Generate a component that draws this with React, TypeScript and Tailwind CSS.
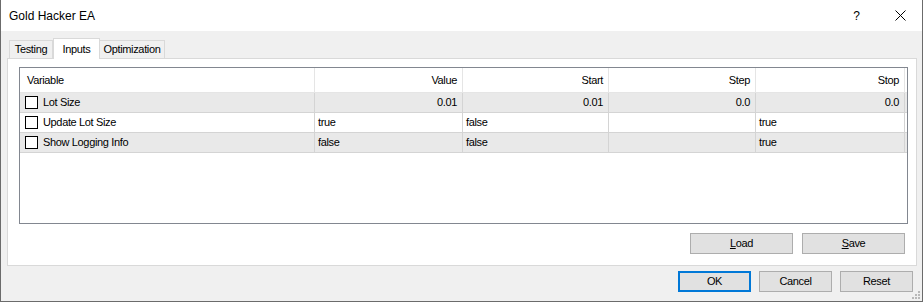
import React from 'react';

type Row = {
  name: string;
  value: string;
  start: string;
  step: string;
  stop: string;
  numeric: boolean;
};

const rows: Row[] = [
  { name: 'Lot Size', value: '0.01', start: '0.01', step: '0.0', stop: '0.0', numeric: true },
  { name: 'Update Lot Size', value: 'true', start: 'false', step: '', stop: 'true', numeric: false },
  { name: 'Show Logging Info', value: 'false', start: 'false', step: '', stop: 'true', numeric: false },
];

function WinButton({ children, primary }: { children: React.ReactNode; primary?: boolean }) {
  return (
    <button
      className={
        primary
          ? 'w-[73px] h-[21px] bg-[#e1e1e1] border-2 border-[#0078d7] flex items-center justify-center'
          : 'w-[73px] h-[21px] bg-[#e1e1e1] border border-[#adadad] flex items-center justify-center'
      }
    >
      {children}
    </button>
  );
}

export default function App() {
  return (
    <div className="relative w-[923px] h-[302px] bg-[#f0f0f0] border-l border-r border-b border-[#6b6b6b] flex flex-col font-['Liberation_Sans',Arial,sans-serif] text-[11px] tracking-[-0.35px] text-black">
      {/* title bar */}
      <div className="h-[31px] bg-white flex items-center shrink-0 tracking-normal">
        <span className="pl-[8px] text-[12px]">Gold Hacker EA</span>
        <div className="ml-auto flex items-center">
          <span className="text-[12px]">?</span>
          <svg width="11" height="11" viewBox="0 0 11 11" className="ml-[35px] mr-[16px]">
            <path d="M0.5 0.5 L10.5 10.5 M10.5 0.5 L0.5 10.5" stroke="#000" strokeWidth="1" fill="none" />
          </svg>
        </div>
      </div>

      {/* tabs */}
      <div className="flex items-end h-[20px] mt-[7px] pl-[8px]">
        <div className="w-[44px] h-[18px] border-l border-t border-r border-[#d9d9d9] flex items-center justify-center">
          Testing
        </div>
        <div className="relative z-10 w-[47px] h-[21px] -mb-px bg-white border-l border-t border-r border-[#d9d9d9] flex items-start justify-center pt-[2px]">
          Inputs
        </div>
        <div className="w-[65px] h-[18px] border-t border-r border-[#d9d9d9] flex items-center justify-center">
          Optimization
        </div>
      </div>

      {/* tab panel */}
      <div className="ml-[6px] w-[910px] h-[208px] bg-white border border-[#d9d9d9] flex flex-col">
        <div className="ml-[11px] mt-[8px] w-[889px] h-[157px] border border-[#828790] flex flex-col">
          <div className="flex h-[25px] border-b border-[#e5e5e5] items-center">
            <div className="w-[295px] h-full pl-[7px] border-r border-[#e5e5e5] flex items-center">Variable</div>
            <div className="w-[148px] h-full pr-[5px] border-r border-[#e5e5e5] flex items-center justify-end">Value</div>
            <div className="w-[146px] h-full pr-[5px] border-r border-[#e5e5e5] flex items-center justify-end">Start</div>
            <div className="w-[147px] h-full pr-[5px] border-r border-[#e5e5e5] flex items-center justify-end">Step</div>
            <div className="w-[149px] h-full pr-[5px] border-r border-[#e5e5e5] flex items-center justify-end">Stop</div>
          </div>
          {rows.map((r, i) => {
            const bg = i % 2 === 0 ? 'bg-[#e9e9e9]' : 'bg-white';
            const align = r.numeric ? 'justify-end pr-[5px]' : 'justify-start pl-[3px]';
            return (
              <div key={r.name} className={`flex h-[20px] border-b border-[#d4d4d4] ${bg}`}>
                <div className="w-[295px] h-full pl-[5px] border-r border-[#d4d4d4] flex items-center gap-[5px]">
                  <span className="w-[13px] h-[13px] border border-black bg-white shrink-0" />
                  <span>{r.name}</span>
                </div>
                <div className={`w-[148px] h-full border-r border-[#d4d4d4] flex items-center ${align}`}>{r.value}</div>
                <div className={`w-[146px] h-full border-r border-[#d4d4d4] flex items-center ${align}`}>{r.start}</div>
                <div className={`w-[147px] h-full border-r border-[#d4d4d4] flex items-center ${align}`}>{r.step}</div>
                <div className={`w-[149px] h-full border-r border-[#d4d4d4] flex items-center ${align}`}>{r.stop}</div>
              </div>
            );
          })}
        </div>
        <div className="flex justify-end gap-[9px] mt-[9px] pr-[11px]">
          <button className="w-[103px] h-[21px] bg-[#e1e1e1] border border-[#adadad] flex items-center justify-center">
            <span><span className="underline">L</span>oad</span>
          </button>
          <button className="w-[103px] h-[21px] bg-[#e1e1e1] border border-[#adadad] flex items-center justify-center">
            <span><span className="underline">S</span>ave</span>
          </button>
        </div>
      </div>

      {/* dialog buttons */}
      <div className="flex justify-end gap-[8px] mt-[5px] pr-[9px]">
        <WinButton primary>OK</WinButton>
        <WinButton>Cancel</WinButton>
        <WinButton>Reset</WinButton>
      </div>

      {/* size grip */}
      <svg width="9" height="9" viewBox="0 0 9 9" className="absolute right-[2px] bottom-[2px]">
        <rect x="7" y="1" width="2" height="2" fill="#b8b8b8" />
        <rect x="4" y="4" width="2" height="2" fill="#b8b8b8" />
        <rect x="7" y="4" width="2" height="2" fill="#b8b8b8" />
        <rect x="1" y="7" width="2" height="2" fill="#b8b8b8" />
        <rect x="4" y="7" width="2" height="2" fill="#b8b8b8" />
        <rect x="7" y="7" width="2" height="2" fill="#b8b8b8" />
      </svg>
    </div>
  );
}
